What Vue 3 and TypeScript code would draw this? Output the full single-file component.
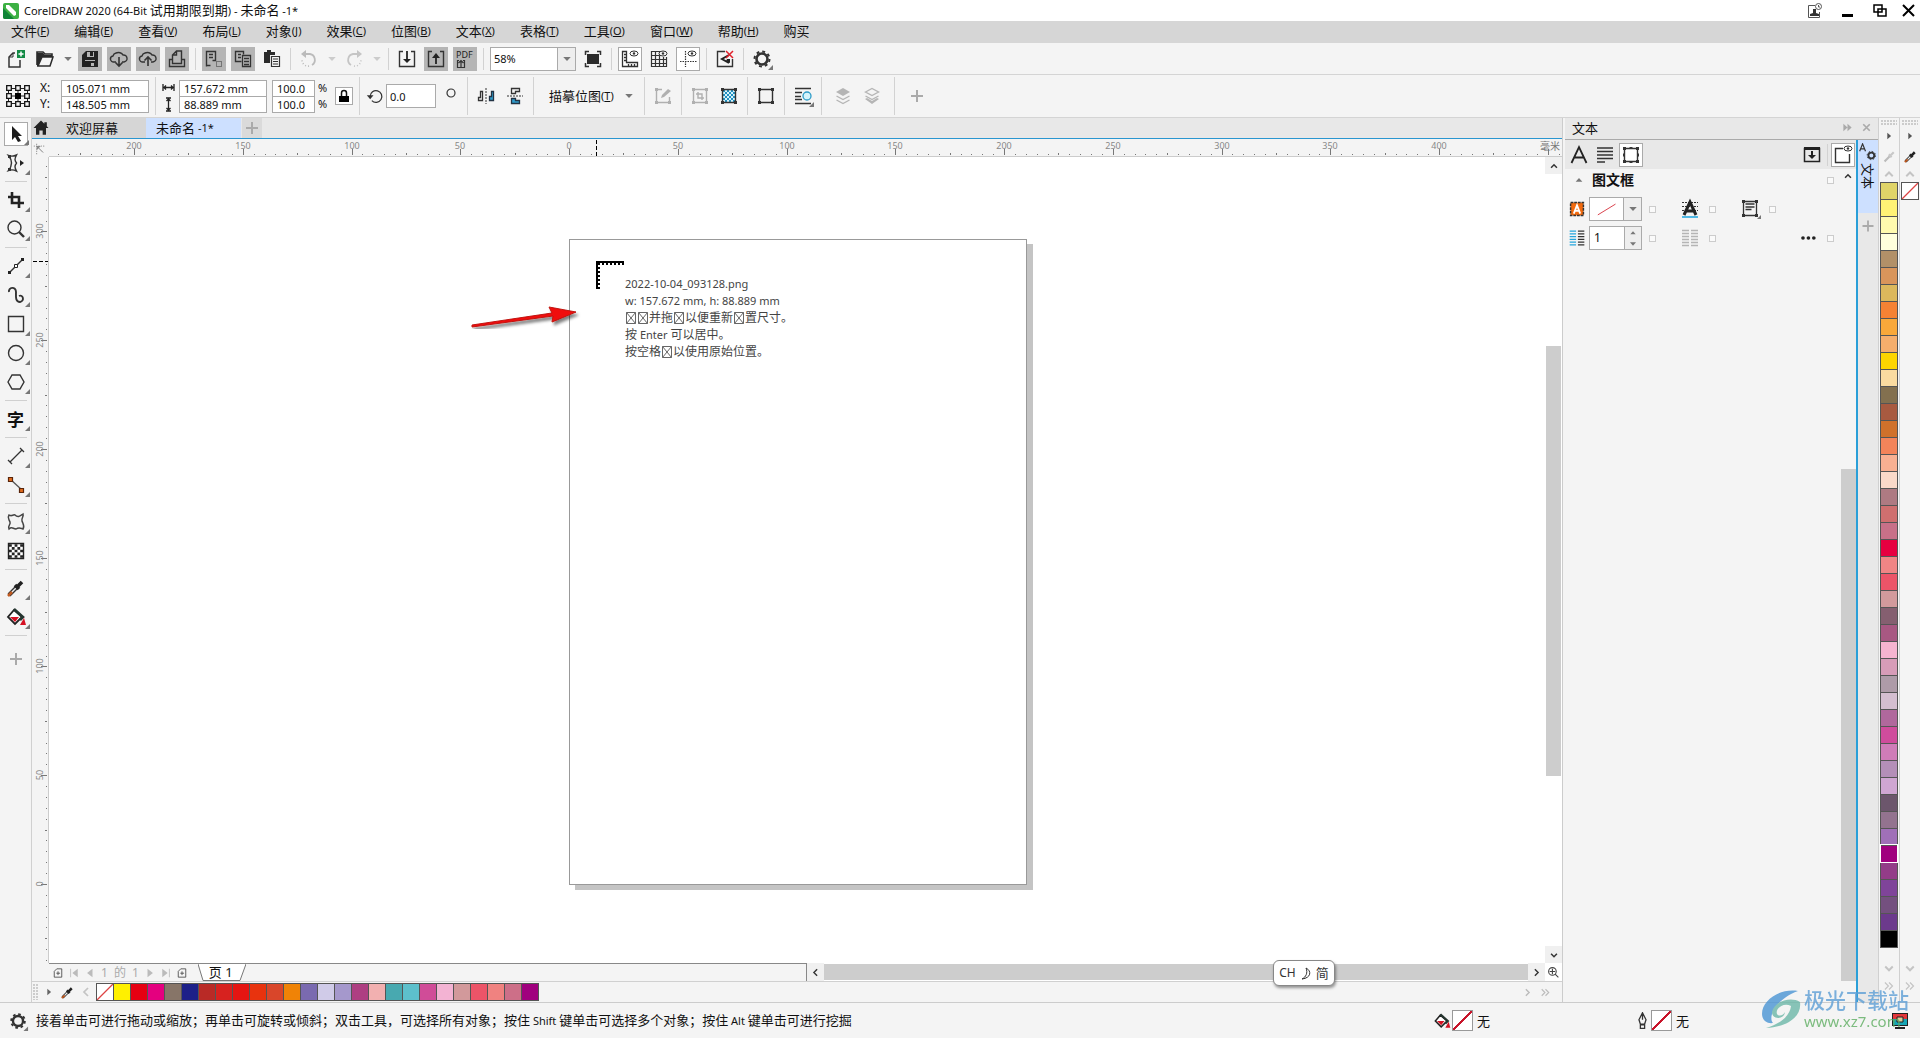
<script setup lang="ts">
import { h, type FunctionalComponent } from 'vue'

// Markup of each 24x24 glyph, keyed by name.
const glyphs: Record<string, string> = {
  new: '<path d="M11 6H9L5 10v10h11v-7" fill="none" stroke="#333" stroke-width="1.5"/><path d="M9 6v4H5" fill="none" stroke="#333"/><path d="M13 3h8v8h-8z" fill="#138a45"/><path d="M17 4.5v5M14.500 7h5" stroke="#fff" stroke-width="1.5"/>',
  open: '<path d="M4 18V5h6l2 2h7v3" fill="none" stroke="#2b2b2b" stroke-width="1.6"/><path d="M4 6h6l2 2h7v2H9L5 19H4z" fill="#2b2b2b"/><path d="M9 10h11l-3 9H5z" fill="#f4f4f4" stroke="#2b2b2b" stroke-width="1.5"/>',
  save: '<path d="M4 8l4-4h12v16H4z" fill="#222"/><path d="M9 5h7v5H9z" fill="#b5b5b5"/><path d="M12 5h3v4h-3z" fill="#222"/><path d="M7 13h10v1H7zM13 16h3v3h-3z" fill="#b5b5b5"/>',
  cloudDown: '<path d="M9 15H7a3 3 0 0 1-1-6 4 4 0 0 1 3-3 5 4 0 0 1 7 2 3.500 3.500 0 0 1 1 7h-2" fill="none" stroke="#333" stroke-width="1.4"/><path d="M12 10v9M8.500 15.500L12 19l3.500-3.500" fill="none" stroke="#333" stroke-width="1.6"/>',
  cloudUp: '<path d="M9 15H7a3 3 0 0 1-1-6 4 4 0 0 1 3-3 5 4 0 0 1 7 2 3.500 3.500 0 0 1 1 7h-2" fill="none" stroke="#333" stroke-width="1.4"/><path d="M12 19v-9M8.500 13.500L12 10l3.500 3.500" fill="none" stroke="#333" stroke-width="1.6"/>',
  print: '<path d="M4.500 12.500h3v4h9v-4h3v7h-15zM7.500 14V8l4-4h5v12M11.500 4v4h-4" fill="none" stroke="#333" stroke-width="1.4"/>',
  cut: '<path d="M4.500 19.500v-15h9v9h-3M4.500 14.500v4h4M7 7.500h4M7 10.500h4" fill="none" stroke="#333" stroke-width="1.4"/><path d="M14.500 14.500h5v5h-5z" fill="none" stroke="#333" stroke-dasharray="1 1"/>',
  copy: '<path d="M10.500 14.500h-6v-10h8v3M7 7.500h3M7 10.500h3" fill="none" stroke="#333" stroke-width="1.4"/><path d="M11.500 8.500h8v11h-8zM13 11.500h5M13 14.500h5M13 17.500h5" fill="none" stroke="#333" stroke-width="1.3"/>',
  paste: '<path d="M4 5h3V3h4v2h4v3h-5v8H4z" fill="#2b2b2b"/><path d="M11.500 9.500h8v10h-8zM13 12h5M13 14.500h5M13 17h5" fill="none" stroke="#333" stroke-width="1.2"/>',
  undo: '<path d="M6 7h7a6 6 0 0 1 2 11" fill="none" stroke="#bbb" stroke-width="1.8"/><path d="M9 3v8L4 7z" fill="#bbb"/><path d="M12 19a6 6 0 0 1-7-6" fill="none" stroke="#bbb" stroke-width="1.6" stroke-dasharray="1 2"/>',
  redo: '<path d="M18 7h-7a6 6 0 0 0-2 11" fill="none" stroke="#c5c5c5" stroke-width="1.8"/><path d="M15 3v8l5-4z" fill="#c5c5c5"/><path d="M12 19a6 6 0 0 0 7-6" fill="none" stroke="#c5c5c5" stroke-width="1.6" stroke-dasharray="1 2"/>',
  import: '<path d="M8 4.500H4.500v15h15v-15H16" fill="none" stroke="#333" stroke-width="1.4"/><path d="M12 4v10" stroke="#222" stroke-width="1.8"/><path d="M8 12h8l-4 4z" fill="#222"/>',
  export: '<path d="M8 4.500H4.500v15h15v-15H16" fill="none" stroke="#333" stroke-width="1.4"/><path d="M12 8v9" stroke="#222" stroke-width="1.8"/><path d="M8 11h8l-4-5z" fill="#222"/>',
  pdf: '<path d="M6 13.500H4.500v7h7v-7H10M8 20v-6M5.500 16L8 13.500l2.500 2.500" fill="none" stroke="#333" stroke-width="1.2"/><text x="3" y="11" font-size="9" font-family="Noto Sans, sans-serif" fill="#222">PDF</text>',
  fit: '<path d="M4.500 8V4.500H8M16 4.500h3.500V8M19.500 16v3.500H16M8 19.500H4.500V16" fill="none" stroke="#333" stroke-width="1.5"/><path d="M6 7h12v10H6z" fill="#2b2b2b"/>',
  rulers: '<path d="M4.500 4.500h4v11h11v4h-15zM6 7.500h2M6 10.500h2M6 13.500h2M10.500 17v2M13.500 17v2M16.500 17v2" fill="none" stroke="#333" stroke-width="1.3"/><ellipse cx="16" cy="6.500" rx="4" ry="2.500" fill="#fff" stroke="#333"/><circle cx="16" cy="6.500" r="1.200" fill="#333"/>',
  grid: '<path d="M4.500 4v16M8.500 4v16M12.500 4v16M16.500 10v10M19.500 10v10M4 4.500h8M4 8.500h8M4 12.500h16M4 16.500h16M4 19.500h16" fill="none" stroke="#333" stroke-width="1.2"/><ellipse cx="16" cy="6.500" rx="4" ry="2.500" fill="#f4f4f4" stroke="#333"/><circle cx="16" cy="6.500" r="1.200" fill="#333"/>',
  guides: '<path d="M9.500 4v16M4 14.500h17" fill="none" stroke="#333" stroke-width="1.2" stroke-dasharray="1.500 1"/><ellipse cx="16" cy="6.500" rx="4" ry="2.500" fill="#fff" stroke="#333"/><circle cx="16" cy="6.500" r="1.200" fill="#333"/>',
  snapOff: '<path d="M12 4.500H4.500v15h15V12" fill="none" stroke="#333" stroke-width="1.4"/><path d="M16 8L9 12l7 4" fill="none" stroke="#222" stroke-width="2"/><path d="M14 12h3v4l-4-2z" fill="#222"/><path d="M13 4l7 7M20 4l-7 7" stroke="#e0202a" stroke-width="1.5"/>',
  gear: '<circle cx="12" cy="12" r="5.500" fill="none" stroke="#333" stroke-width="2.600"/><circle cx="12" cy="12" r="7.500" fill="none" stroke="#333" stroke-width="2" stroke-dasharray="2.900 2.990"/><path d="M23 18v5h-5z" fill="#777"/>',
  origin: '<path d="M2.500 4.500h19v15h-19zM2.500 12h19M12 4v16" fill="none" stroke="#222"/><g fill="#f4f4f4" stroke="#111" stroke-width="1.300"><path d="M.7 1.700h4.600v4.600H.7zM9.700 1.700h4.600v4.600H9.700zM18.700 1.700h4.600v4.600h-4.600zM.7 9.700h4.600v4.600H.7zM18.700 9.700h4.600v4.600h-4.600zM.7 17.700h4.600v4.600H.7zM9.700 17.700h4.600v4.600H9.700zM18.700 17.700h4.600v4.600h-4.600z"/></g><path d="M9 9h6v6H9z"/>',
  rotate: '<path d="M7 17.500a7 7 0 1 0-2-5" fill="none" stroke="#333" stroke-width="1.500"/><path d="M1 11h8l-4 5z" fill="#333"/>',
  mirrorH: '<path d="M4.500 16.500v-3h2v-6h2v9z" fill="none" stroke="#333" stroke-width="1.300"/><path d="M12 4v16" stroke="#333" stroke-dasharray="2 1"/><path d="M15.500 16.500v-4h2v-5h2v9z" fill="#2f9ccc" stroke="#234" stroke-width="1.300"/>',
  mirrorV: '<path d="M8.500 9.500v-5h8v3h-4v2z" fill="none" stroke="#333" stroke-width="1.300"/><path d="M4 12h16" stroke="#333" stroke-dasharray="2 1"/><path d="M8.500 14.500h4v2h4v3h-8z" fill="#2f9ccc" stroke="#234" stroke-width="1.300"/>',
  editBitmap: '<path d="M11 5.500H5.500v13h13V13" fill="none" stroke="#b0b0b0" stroke-width="1.400"/><path d="M10 14l1-3 6-6 3 2-7 6z" fill="#b0b0b0"/><path d="M4 4h3v3H4zM4 17h3v3H4zM17 17h3v3h-3z" fill="#b0b0b0"/>',
  cropBitmap: '<path d="M5.500 5.500h13v13h-13zM10 8v6h6M8 10h6v6" fill="none" stroke="#b0b0b0" stroke-width="1.400"/><path d="M4 4h3v3H4zM17 4h3v3h-3zM4 17h3v3H4zM17 17h3v3h-3z" fill="#b0b0b0"/>',
  colorMask: '<path d="M5 5h14v14H5z" fill="#d4f3fc"/><path d="M6 7h12M6 11h12M6 15h12" stroke="#2290c0" stroke-width="2" stroke-dasharray="2 2"/><path d="M8 9h10M8 13h10M8 17h10" stroke="#2290c0" stroke-width="2" stroke-dasharray="2 2"/><path d="M5.500 5.500h13v13h-13z" fill="none" stroke="#333" stroke-width="1.400"/><path d="M4 4h3v3H4zM17 4h3v3h-3zM4 17h3v3H4zM17 17h3v3h-3z" fill="#333"/>',
  frame: '<path d="M5.500 5.500h13v13h-13z" fill="none" stroke="#333" stroke-width="1.400"/><path d="M4 4h3v3H4zM17 4h3v3h-3zM4 17h3v3H4zM17 17h3v3h-3z" fill="#333"/>',
  textFrame: '<path d="M5.500 5.500h13v13h-13z" fill="none" stroke="#333" stroke-width="1.400"/><path d="M4 4h3v3H4zM17 4h3v3h-3zM4 17h3v3H4zM17 17h3v3h-3zM10.500 4h3v2h-3zM10.500 18h3v2h-3zM4 10.500h2v3H4zM18 10.500h2v3h-2z" fill="#333"/>',
  wrap: '<path d="M4 4.500h16M4 8.500h7M4 12.500h6M4 15.500h7M4 19.500h16" stroke="#333" stroke-width="1.300"/><circle cx="16" cy="12" r="4" fill="#d5f3fb" stroke="#2e9cc8" stroke-width="1.300"/><path d="M23 18v5h-5z" fill="#777"/>',
  toFront: '<path d="M5 8l7-4 7 4-7 4z" fill="#b5b5b5"/><path d="M5.500 12l6.500 3.500 6.500-3.500M5.500 16l6.500 3.500 6.500-3.500" fill="none" stroke="#b5b5b5" stroke-width="1.400"/>',
  toBack: '<path d="M5.500 8L12 4.500 18.500 8 12 11.500zM5.500 12l6.500 3.500 6.500-3.500" fill="none" stroke="#b5b5b5" stroke-width="1.400"/><path d="M5 15l2-1 5 3 5-3 2 1-7 5z" fill="#b5b5b5"/>',
  plus: '<path d="M12 6v12M6 12h12" stroke="#aaa" stroke-width="2"/>',
  pick: '<path d="M8 4v14l3-3 3 5 3-1-3-5h4z" fill="#1c1c1c"/>',
  shape: '<path d="M4.500 4.500c3 1 5 1 8-.5-2 4-2 5 0 8-2 3-2 4 0 8-3-1.500-5-1.500-8-.5 4-5 4-10 0-15z" fill="none" stroke="#333" stroke-width="1.400"/><path d="M16 9l4 3-4 3z" fill="#222"/><path d="M4 4h3v3H4zM4 17h3v3H4z" fill="#333"/>',
  crop: '<path d="M8 4v11h12M4 9h11v11" fill="none" stroke="#222" stroke-width="2.600"/>',
  zoom: '<circle cx="10.500" cy="10.500" r="6.500" fill="none" stroke="#333" stroke-width="1.400"/><path d="M15 15l5 5" stroke="#333" stroke-width="2.400"/>',
  freehand: '<path d="M5 19L19 5" stroke="#333" stroke-width="1.400"/><path d="M4 17h3v3H4zM17 4h3v3h-3z" fill="#222"/><path d="M10.500 10.500h3v3h-3z" fill="#fff" stroke="#222"/>',
  artistic: '<path d="M5 9c-1-5 7-6 7 0 0 4-1 10 4 10 5-1 3-8-1-6" fill="none" stroke="#333" stroke-width="1.900"/>',
  rect: '<path d="M4.500 4.500h15v15h-15z" fill="none" stroke="#333" stroke-width="1.400"/>',
  ellipse: '<circle cx="12" cy="12" r="7.500" fill="none" stroke="#333" stroke-width="1.400"/>',
  polygon: '<path d="M4 12l4-7h8l4 7-4 7H8z" fill="none" stroke="#333" stroke-width="1.400"/>',
  dimension: '<path d="M6 18L18 6M4 16l4 4M16 4l4 4" fill="none" stroke="#333" stroke-width="1.300"/>',
  connector: '<path d="M6 6l12 11" stroke="#555" stroke-width="1.300"/><path d="M4.500 4.500h4v4h-4zM15.500 15.500h4v4h-4z" fill="#e06b1c" stroke="#59250a" stroke-width="1.200"/>',
  distort: '<path d="M5 5c3 2 4-1 6 0 3 3 5 1 8-1 1 3-2 4-1 7s3 5 1 8c-3-1-4-2-7 0-3 0-4-3-7 0-2-3 2-4 1-7S3 8 5 5z" fill="none" stroke="#444" stroke-width="1.500"/>',
  checker: '<path d="M4.500 4.500h15v15h-15z" fill="#fff" stroke="#222" stroke-width="1.400"/><path d="M5 6.500h14M5 12h14M5 17.500h14" stroke="#222" stroke-width="2.700" stroke-dasharray="2.800 2.800"/><path d="M7.800 9.300H19M7.800 14.800H19" stroke="#222" stroke-width="2.700" stroke-dasharray="2.800 2.800"/>',
  dropper: '<path d="M5 19l8-8" stroke="#333" stroke-width="4"/><path d="M7 17l5-5" stroke="#eee" stroke-width="1.500"/><path d="M4 20l4-4" stroke="#c05a20" stroke-width="2.600"/><path d="M11 9l4 4M13 11l5-5" stroke="#222" stroke-width="3.600"/>',
  dropperOff: '<path d="M5 19l8-8" stroke="#bbb" stroke-width="3"/><path d="M11 9l4 4M13 11l5-5" stroke="#c8c8c8" stroke-width="3"/>',
  fill: '<path d="M10 5l8 7-7 7-7-7z" fill="#fff" stroke="#222" stroke-width="1.800"/><path d="M10 4l9 8-3 3" fill="none" stroke="#25352f" stroke-width="2.600"/><path d="M6 12h9l-4 5z" fill="#d51224"/><path d="M20 13l2 7h-6z" fill="#d51224"/>',
  home: '<path d="M12 3L3 12h3v8h4v-5h4v5h4v-8h3l-2-2V5h-3v2z" fill="#222"/>',
  axes: '<path d="M3 7h18M8 3v18" fill="none" stroke="#888" stroke-dasharray="2 2" stroke-width="1.600"/><path d="M10 9l9 9" stroke="#777" stroke-width="1.600"/><path d="M8 7h7l-7 7z" fill="#888"/>',
  char: '<path d="M4.500 20L12 4l7.500 16M7.500 14.500h9" fill="none" stroke="#222" stroke-width="1.800"/>',
  para: '<path d="M4 5h16M4 8.500h16M4 12h16M4 15.500h16M4 19h8" stroke="#333" stroke-width="1.700"/>',
  panelIn: '<path d="M8 5.500H4.500v13h15v-13H16" fill="none" stroke="#222" stroke-width="1.500"/><path d="M4 4h16v3H4z" fill="#222"/><path d="M12 8v5" stroke="#222" stroke-width="2"/><path d="M8 12h8l-4 4z" fill="#222"/>',
  panelEye: '<path d="M12 5.500H4.500v14h14V11" fill="none" stroke="#333" stroke-width="1.400"/><ellipse cx="17" cy="5.500" rx="4" ry="2.500" fill="#fff" stroke="#333"/><circle cx="17" cy="5.500" r="1.200" fill="#333"/>',
  frameFill: '<path d="M5 5h14v14H5z" fill="#f26a0e" stroke="#333" stroke-width="1.600" stroke-dasharray="3 1"/><path d="M8.500 17L12 8l3.500 9M10 14h4" fill="none" stroke="#fff" stroke-width="2"/>',
  baseline: '<path d="M4 5.500h16M4 9.500h16M4 13.500h16" stroke="#333" stroke-dasharray="2 1"/><path d="M6 18L12 5l6 13M8 14h8" fill="none" stroke="#222" stroke-width="3"/><path d="M4 20h16" stroke="#27a9e0" stroke-width="1.600"/>',
  align: '<path d="M5.500 4.500h13v14h-13zM7.500 7h9M7.500 10h9M7.500 12.500h6" fill="none" stroke="#333" stroke-width="1.300"/><path d="M4 3h3v3H4zM17 3h3v3h-3zM4 17h3v3H4zM17 17h3v3h-3z" fill="#333"/><path d="M23 18v4h-4z" fill="#777"/>',
  columns: '<path d="M4 4.500h7M4 7.500h7M4 10.500h7M4 13.500h7M4 16.500h7M4 19.500h7" stroke="#26a5dc" stroke-width="1.500"/><path d="M13 4.500h7M13 7.500h7M13 10.500h7M13 13.500h7M13 16.500h7M13 19.500h7" stroke="#333" stroke-width="1.500"/>',
  columnsOff: '<path d="M4 4.500h7M4 7.500h7M4 10.500h7M4 13.500h7M4 16.500h7M4 19.500h7M13 4.500h7M13 7.500h7M13 10.500h7M13 13.500h7M13 16.500h7M13 19.500h7" stroke="#b5b5b5" stroke-width="1.500"/>',
  dots: '<circle cx="6" cy="12" r="2.200" fill="#222"/><circle cx="12.500" cy="12" r="2.200" fill="#222"/><circle cx="19" cy="12" r="2.200" fill="#222"/>',
  textTab: '<path d="M2 10L5.500 1 9 10M3.500 7h4" fill="none" stroke="#333" stroke-width="1.400"/><circle cx="16" cy="15" r="3.500" fill="none" stroke="#333" stroke-width="2.200"/><circle cx="16" cy="15" r="5" fill="none" stroke="#333" stroke-width="1.200" stroke-dasharray="1.900 2"/>',
  up: '<path d="M7 15l5-5 5 5" fill="none" stroke="currentColor" stroke-width="2.600"/>',
  down: '<path d="M7 10l5 5 5-5" fill="none" stroke="currentColor" stroke-width="2.600"/>',
  left: '<path d="M15 6l-6 6 6 6" fill="none" stroke="currentColor" stroke-width="2.600"/>',
  right: '<path d="M9 6l6 6-6 6" fill="none" stroke="currentColor" stroke-width="2.600"/>',
  more: '<path d="M5 6l6 6-6 6M12 6l6 6-6 6" fill="none" stroke="currentColor" stroke-width="2"/>',
  skip: '<path d="M3 4l9 8-9 8zM12 4l9 8-9 8z" fill="currentColor"/>',
  close: '<path d="M6 6l12 12M18 6L6 18" stroke="currentColor" stroke-width="3"/>',
  triRight: '<path d="M8 4l9 8-9 8z" fill="currentColor"/>',
  triLeft: '<path d="M18 2L5 12l13 10z" fill="currentColor"/>',
  triNext: '<path d="M6 2l13 10L6 22z" fill="currentColor"/>',
  triUp: '<path d="M4 16l8-9 8 9z" fill="currentColor"/>',
  triDown: '<path d="M3 7l9 10 9-10z" fill="currentColor"/>',
  first: '<path d="M21 2L8 12l13 10zM3 2h2v20H3z" fill="currentColor"/>',
  last: '<path d="M3 2l13 10L3 22zM19 2h2v20h-2z" fill="currentColor"/>',
  addPage: '<path d="M3 8l6-6h12v20H3zM12 8v9M8 12.500h9" fill="none" stroke="#444" stroke-width="2"/>',
  navigator: '<circle cx="10" cy="10" r="7" fill="none" stroke="#444" stroke-width="2"/><path d="M10 5v10M5 10h10M15 15l6 6" stroke="#444" stroke-width="2"/>',
  nib: '<path d="M12 1l5 10-2 6H9l-2-6zM9 18h6v5H9zM12 2v9" fill="none" stroke="#333" stroke-width="1.800"/>',
}

const Glyph: FunctionalComponent<{ name: string; size?: number }> = (props) =>
  h('svg', {
    class: 'glyph',
    viewBox: '0 0 24 24',
    width: props.size ?? 24,
    height: props.size ?? 24,
    'aria-hidden': 'true',
    innerHTML: glyphs[props.name],
  })
Glyph.props = ['name', 'size']

// Chinese runs are set two pixels larger than the Latin ones.
const Mixed: FunctionalComponent<{ text: string }> = (props) =>
  props.text
    .split(/([\u3000-\u9fff\uff00-\uffef]+)/)
    .filter(Boolean)
    .map((run) => (/[\u3000-\u9fff\uff00-\uffef]/.test(run) ? h('span', { class: 'han' }, run) : run))
Mixed.props = ['text']

const menus: [string, string][] = [
  ['文件', 'F'], ['编辑', 'E'], ['查看', 'V'], ['布局', 'L'], ['对象', 'J'], ['效果', 'C'], ['位图', 'B'],
  ['文本', 'X'], ['表格', 'T'], ['工具', 'O'], ['窗口', 'W'], ['帮助', 'H'], ['购买', ''],
]

interface Tool { icon: string; label: string; kind?: 'on' | 'boxed' | 'caret' | 'sep' | 'combo'; dim?: boolean }
const sep: Tool = { icon: '', label: '', kind: 'sep' }
const standard: Tool[] = [
  { icon: 'new', label: '新建' }, { icon: 'open', label: '打开' }, { icon: 'triDown', label: '最近打开', kind: 'caret' },
  { icon: 'save', label: '保存', kind: 'on' }, { icon: 'cloudDown', label: '从云打开', kind: 'on' },
  { icon: 'cloudUp', label: '保存到云', kind: 'on' }, { icon: 'print', label: '打印', kind: 'on' }, sep,
  { icon: 'cut', label: '剪切', kind: 'on' }, { icon: 'copy', label: '复制', kind: 'on' }, { icon: 'paste', label: '粘贴' }, sep,
  { icon: 'undo', label: '撤消' }, { icon: 'triDown', label: '撤消列表', kind: 'caret', dim: true },
  { icon: 'redo', label: '重做' }, { icon: 'triDown', label: '重做列表', kind: 'caret', dim: true }, sep,
  { icon: 'import', label: '导入' }, { icon: 'export', label: '导出', kind: 'on' }, { icon: 'pdf', label: '发布为 PDF', kind: 'on' }, sep,
  { icon: '', label: '缩放级别', kind: 'combo' }, { icon: 'fit', label: '全屏预览' }, sep,
  { icon: 'rulers', label: '显示标尺', kind: 'boxed' }, { icon: 'grid', label: '显示网格' },
  { icon: 'guides', label: '显示辅助线', kind: 'boxed' }, sep,
  { icon: 'snapOff', label: '贴齐关闭' }, sep, { icon: 'gear', label: '选项' },
]

const bitmapTools: Tool[] = [
  { icon: 'editBitmap', label: '编辑位图' }, sep, { icon: 'cropBitmap', label: '裁剪位图' },
  { icon: 'colorMask', label: '位图颜色遮罩' }, sep, { icon: 'frame', label: '轮廓' }, sep,
  { icon: 'wrap', label: '文本换行' }, sep,
]

interface BoxTool { icon: string; label: string; flyout?: boolean; active?: boolean }
const toolbox: (BoxTool | null)[] = [
  { icon: 'pick', label: '选择', flyout: true, active: true }, { icon: 'shape', label: '形状', flyout: true }, null,
  { icon: 'crop', label: '裁剪', flyout: true }, { icon: 'zoom', label: '缩放', flyout: true }, null,
  { icon: 'freehand', label: '手绘', flyout: true }, { icon: 'artistic', label: '艺术笔', flyout: true },
  { icon: 'rect', label: '矩形', flyout: true }, { icon: 'ellipse', label: '椭圆形', flyout: true },
  { icon: 'polygon', label: '多边形', flyout: true }, null,
  { icon: 'text', label: '文本', flyout: true }, null,
  { icon: 'dimension', label: '平行度量', flyout: true }, { icon: 'connector', label: '连接器', flyout: true }, null,
  { icon: 'distort', label: '变形', flyout: true }, { icon: 'checker', label: '透明度' }, null,
  { icon: 'dropper', label: '颜色滴管', flyout: true }, { icon: 'fill', label: '交互式填充', flyout: true }, null,
]

// One ruler step is 5 mm; 40 steps span 435 px at the current zoom.
const stepToPx = (step: number) => Math.round((step * 435) / 40)
const originX = 520
const originY = 727
const ticks = (from: number, to: number) => Array.from({ length: to - from + 1 }, (_, i) => from + i)
const across = ticks(-47, 94)
const downward = ticks(-8, 66)
const tickLength = (step: number) => (step % 10 === 0 ? 6 : step % 5 === 0 ? 2 : 1)

const palette = (
  'e0d468 fff275 fffaae ffffdc b29068 d9955b dcb85c f58234 f9a83a f5ae6c fdd500 fadba0 83704f a85a40 d0712b ' +
  'f3845a f8b092 fad9c9 ae7a82 cf6f6f c87088 e60040 f08585 ec5468 d29a9c 855f70 a85882 f6b4d0 d79cb8 ae9ba8 ' +
  'd4bed0 b0689c cf4c9c cf7cb8 b48fb8 cfa6d2 6c566c 93738f a070b8 a0007e 933c88 7f4499 74507f 6c3a8c 000000'
).split(' ')
const documentColors = (
  'fff000 e60012 e4007f 877568 1d2088 b92a26 d7221f e51512 e8330e d9462a f08306 7a6ab0 d0cbe8 a598cc ae3f82 ' +
  'f2b0b0 48a9b0 5dc0cc d04c98 f3b3d3 d2999b ec5468 f08280 cd6f88 a0007e'
).split(' ')

// A "□" stands for a character the font has no glyph for.
const hints = ['2022-10-04_093128.png', 'w: 157.672 mm, h: 88.889 mm', '□□并拖□以便重新□置尺寸。', '按 Enter 可以居中。', '按空格□以使用原始位置。']
const statusHint = '接着单击可进行拖动或缩放；再单击可旋转或倾斜；双击工具，可选择所有对象；按住 Shift 键单击可选择多个对象；按住 Alt 键单击可进行挖掘'
</script>

<template>
  <div class="app">
    <header class="title">
      <svg class="logo" viewBox="0 0 16 16" width="16" height="16" aria-hidden="true">
        <rect width="16" height="16" rx="2" fill="#3cb043" /><path d="M0 5l11 11H2a2 2 0 0 1-2-2z" fill="#0f8436" /><path d="M3 2h3l7 7v3l-2 1L3 5z" fill="#fff" />
      </svg>
      <h1><Mixed text="CorelDRAW 2020 (64-Bit 试用期限到期) - 未命名 -1*" /></h1>
      <div class="window-buttons">
        <button aria-label="登录"><svg width="16" height="16" viewBox="0 0 16 16"><path d="M9 2.500H2.500v12h11V9" fill="none" stroke="#555" /><path d="M4 13v-2l3-1V6h3v4l3 1v2z" fill="#333" /><circle cx="12.500" cy="3.500" r="3" fill="#fff" stroke="#555" /><path d="M12.500 2v2H14" fill="none" stroke="#555" /></svg></button>
        <button aria-label="最小化"><svg width="16" height="16" viewBox="0 0 16 16"><path d="M3 11h11v3H3z" /></svg></button>
        <button aria-label="还原"><svg width="16" height="16" viewBox="0 0 16 16"><path d="M2 2h8v7H2zM6 6h8v7H6z" fill="#fff" stroke="#000" stroke-width="1.500" /></svg></button>
        <button class="close" aria-label="关闭"><svg width="16" height="16" viewBox="0 0 16 16"><path d="M2 2l11 11M13 2L2 13" stroke="#000" stroke-width="2" /></svg></button>
      </div>
    </header>

    <nav class="menu">
      <button v-for="[name, key] in menus" :key="name"><span class="han">{{ name }}</span><template v-if="key">(<u>{{ key }}</u>)</template></button>
    </nav>

    <div class="bar standard">
      <template v-for="(t, i) in standard" :key="i">
        <span v-if="t.kind === 'sep'" class="sep"></span>
        <span v-else-if="t.kind === 'combo'" class="combo">
          <select :aria-label="t.label"><option>58%</option></select>
          <span class="drop"><Glyph name="triDown" :size="10" /></span>
        </span>
        <button v-else :class="['tool', t.kind, { dim: t.dim }]" :aria-label="t.label"><Glyph :name="t.icon" :size="t.kind === 'caret' ? 10 : 24" /></button>
      </template>
    </div>

    <div class="bar property">
      <button class="tool" aria-label="对象原点"><Glyph name="origin" /></button>
      <div class="axis"><label for="px">X:</label><label for="py">Y:</label></div>
      <div class="pair wide"><input id="px" value="105.071 mm" /><input id="py" value="148.505 mm" /></div>
      <span class="sep"></span>
      <div class="size-icons">
        <svg width="13" height="17" viewBox="0 0 13 17"><path d="M1 5v7M12 5v7M1 8.500h11M4 6.500l-2 2 2 2M9 6.500l2 2-2 2" fill="none" stroke="#222" stroke-width="1.300" /></svg>
        <svg width="13" height="17" viewBox="0 0 13 17"><path d="M4 2h5M4 15h5M6.500 2v13M4.500 5l2-2 2 2M4.500 12l2 2 2-2" fill="none" stroke="#222" stroke-width="1.300" /></svg>
      </div>
      <div class="pair wide"><input aria-label="宽度" value="157.672 mm" /><input aria-label="高度" value="88.889 mm" /></div>
      <div class="pair scale"><input aria-label="水平缩放" value="100.0" /><input aria-label="垂直缩放" value="100.0" /></div>
      <div class="percent"><span>%</span><span>%</span></div>
      <button class="lock" aria-label="锁定比率"><svg width="12" height="14" viewBox="0 0 12 14"><path d="M3.500 7V4a2.500 2.500 0 0 1 5 0v3" fill="none" stroke="#111" stroke-width="1.500" /><path d="M1 7h10v6H1z" /></svg></button>
      <span class="sep"></span>
      <div class="turn">
        <label for="angle"><Glyph name="rotate" :size="20" /></label>
        <input id="angle" class="angle" value="0.0" />
        <svg class="degree" width="10" height="16" viewBox="0 0 10 16"><circle cx="5" cy="5" r="4" fill="none" stroke="#333" stroke-width="1.200" /></svg>
      </div>
      <span class="sep"></span>
      <button class="tool" aria-label="水平镜像"><Glyph name="mirrorH" /></button>
      <button class="tool" aria-label="垂直镜像"><Glyph name="mirrorV" /></button>
      <span class="sep"></span>
      <button class="trace"><span class="han">描摹位图</span>(<u>T</u>)<Glyph name="triDown" :size="10" /></button>
      <span class="sep"></span>
      <template v-for="(t, i) in bitmapTools" :key="i">
        <span v-if="t.kind === 'sep'" class="sep"></span>
        <button v-else class="tool" :aria-label="t.label"><Glyph :name="t.icon" /></button>
      </template>
      <div class="order">
        <button class="tool" aria-label="到图层前面"><Glyph name="toFront" /></button>
        <button class="tool" aria-label="到图层后面"><Glyph name="toBack" /></button>
      </div>
      <span class="sep"></span>
      <button class="tool add" aria-label="快速自定义"><Glyph name="plus" /></button>
    </div>

    <main class="work">
      <aside class="toolbox">
        <template v-for="(t, i) in toolbox" :key="i">
          <hr v-if="!t" />
          <button v-else :class="['tool', { boxed: t.active, flyout: t.flyout }]" :aria-label="t.label">
            <span v-if="t.icon === 'text'" class="zi">字</span><Glyph v-else :name="t.icon" />
          </button>
        </template>
        <button class="tool more" aria-label="快速自定义"><Glyph name="plus" /></button>
      </aside>

      <section class="center">
        <div class="tabs">
          <button class="home" aria-label="欢迎"><Glyph name="home" :size="20" /></button>
          <button class="tab">欢迎屏幕</button>
          <button class="tab current"><Mixed text="未命名 -1*" /></button>
          <button class="new-tab" aria-label="新建文档"><Glyph name="plus" /></button>
        </div>
        <div class="ruler-row">
          <div class="corner"><Glyph name="axes" :size="14" /></div>
          <svg class="ruler-top" height="18" aria-hidden="true">
            <g v-for="s in across" :key="s">
              <rect :x="originX + stepToPx(s)" :y="16 - tickLength(s)" width="1" :height="tickLength(s)" fill="#777" />
              <text v-if="s % 10 === 0 && s < 85" :x="originX + stepToPx(s)" y="10" text-anchor="middle">{{ Math.abs(s * 5) }}</text>
            </g>
            <path d="M547.500 1v16" stroke="#000" stroke-width="1" stroke-dasharray="4 2" />
          </svg>
          <span class="unit">毫米</span>
        </div>
        <div class="view-row">
          <svg class="ruler-left" width="17" aria-hidden="true">
            <g v-for="s in downward" :key="s">
              <rect :x="15 - tickLength(s)" :y="originY - stepToPx(s)" :width="tickLength(s)" height="1" fill="#777" />
              <text v-if="s % 10 === 0" :transform="`translate(11 ${originY - stepToPx(s)}) rotate(-90)`" text-anchor="middle">{{ s * 5 }}</text>
            </g>
            <path d="M1 104.500h15" stroke="#000" stroke-dasharray="4 2" />
          </svg>
          <div class="canvas">
            <div class="page"></div>
            <svg class="corner-cursor" width="28" height="28" viewBox="0 0 28 28" aria-hidden="true">
              <path d="M0 1h28M1 0v28" stroke="#000" stroke-width="2" /><path d="M2 3h26M3 2v26" stroke="#000" stroke-width="2" stroke-dasharray="2 2" />
            </svg>
            <div class="hints">
              <p v-for="line in hints" :key="line"><template v-for="(ch, i) in line.split(/(□|[\u3000-\u9fff]+)/).filter(Boolean)" :key="i"><svg v-if="ch === '□'" class="missing" width="12" height="12" viewBox="0 0 12 12"><path d="M1.500 .5h9v11h-9zM1.500 .5l9 11M10.500 .5l-9 11" fill="none" stroke="#666" /></svg><span v-else :class="{ cjk: /[\u3000-\u9fff]/.test(ch) }">{{ ch }}</span></template></p>
            </div>
            <svg class="pointer" width="120" height="36" viewBox="0 0 120 36" aria-hidden="true">
              <defs><filter id="soft"><feDropShadow dx="2" dy="3" stdDeviation="1.500" flood-opacity=".5" /></filter></defs>
              <path d="M4 21L84 9l-3-6 27 5-24 10 1-6L4 23z" fill="#f0100c" stroke="#c01410" stroke-width="1" filter="url(#soft)" />
            </svg>
          </div>
          <div class="vscroll">
            <button aria-label="向上滚动"><Glyph name="up" :size="14" /></button>
            <div class="track"><div class="thumb"></div></div>
            <button aria-label="向下滚动"><Glyph name="down" :size="14" /></button>
          </div>
        </div>
        <div class="page-row">
          <div class="pages">
            <button aria-label="在前面添加页"><Glyph name="addPage" :size="10" /></button>
            <button aria-label="第一页"><Glyph name="first" :size="10" /></button>
            <button aria-label="上一页"><Glyph name="triLeft" :size="10" /></button>
            <span class="count"><span>1</span><span>的</span><span>1</span></span>
            <button aria-label="下一页"><Glyph name="triNext" :size="10" /></button>
            <button aria-label="最后一页"><Glyph name="last" :size="10" /></button>
            <button aria-label="在后面添加页"><Glyph name="addPage" :size="10" /></button>
            <button class="page-tab">
              <svg width="48" height="17" viewBox="0 0 48 17" aria-hidden="true"><path d="M0 0l5 16h37l6-16z" fill="#fff" /><path d="M0 0l5 16.500h37l6-16.500" fill="none" stroke="#777" /></svg>
              <span>页 1</span>
            </button>
          </div>
          <div class="hscroll">
            <button aria-label="向左滚动"><Glyph name="left" :size="13" /></button>
            <div class="thumb"></div>
            <button aria-label="向右滚动"><Glyph name="right" :size="13" /></button>
            <button class="nav" aria-label="导航器"><Glyph name="navigator" :size="13" /></button>
          </div>
        </div>
        <div class="doc-palette">
          <span class="grip"></span>
          <button aria-label="调色板菜单"><Glyph name="triRight" :size="10" /></button>
          <button aria-label="滴管"><Glyph name="dropper" :size="17" /></button>
          <button class="faint" aria-label="向左"><Glyph name="left" :size="16" /></button>
          <div class="swatches">
            <button class="none" aria-label="无颜色"></button>
            <button v-for="c in documentColors" :key="c" :style="{ background: '#' + c }" :aria-label="'#' + c"></button>
          </div>
          <div class="palette-end"><Glyph name="right" :size="13" /><Glyph name="more" :size="13" /></div>
        </div>
      </section>

      <section class="docker">
        <div class="docker-title"><h2>文本</h2><button aria-label="折叠"><Glyph name="skip" :size="11" /></button><button aria-label="关闭"><Glyph name="close" :size="13" /></button></div>
        <div class="docker-main">
          <div class="panel">
            <div class="panel-tools">
              <button class="tool" aria-label="字符"><Glyph name="char" /></button>
              <button class="tool" aria-label="段落"><Glyph name="para" /></button>
              <button class="tool boxed" aria-label="图文框"><Glyph name="textFrame" /></button>
              <span class="grow"></span>
              <button class="tool" aria-label="默认值"><Glyph name="panelIn" /></button>
              <span class="sep"></span>
              <button class="tool boxed" aria-label="显示"><Glyph name="panelEye" /></button>
            </div>
            <div class="panel-body">
              <div class="fields">
                <div class="group"><Glyph name="triUp" :size="10" /><h3>图文框</h3><i class="mark"></i></div>
                <div class="field-row">
                  <Glyph name="frameFill" :size="22" />
                  <button class="picker" aria-label="背景色"><svg width="34" height="22" viewBox="0 0 34 22"><path d="M8 17L26 6" stroke="#d9404a" /></svg><span class="drop"><Glyph name="triDown" :size="10" /></span></button>
                  <i class="mark"></i>
                  <Glyph class="next" name="baseline" /><i class="mark"></i>
                  <Glyph class="next" name="align" /><i class="mark"></i>
                </div>
                <div class="field-row">
                  <Glyph name="columns" :size="22" />
                  <div class="picker"><input aria-label="栏数" value="1" /><span class="spin"><button aria-label="增加"><Glyph name="triUp" :size="8" /></button><button aria-label="减少"><Glyph name="triDown" :size="8" /></button></span></div>
                  <i class="mark"></i>
                  <Glyph class="next" name="columnsOff" /><i class="mark"></i>
                  <span class="grow"></span>
                  <Glyph name="dots" :size="20" /><i class="mark last"></i>
                </div>
              </div>
              <div class="panel-scroll"><Glyph name="up" :size="14" /><div class="thumb"></div></div>
            </div>
          </div>
          <div class="strip">
            <button class="strip-tab"><Glyph name="textTab" :size="20" /><span>文本</span></button>
            <button class="strip-add" aria-label="添加泊坞窗"><Glyph name="plus" :size="22" /></button>
          </div>
        </div>
      </section>

      <aside class="palette">
        <span class="grip"></span>
        <button aria-label="调色板菜单"><Glyph name="triRight" :size="10" /></button>
        <button class="pipette" aria-label="滴管"><Glyph name="dropperOff" :size="17" /></button>
        <button class="faint" aria-label="向上"><Glyph name="up" :size="18" /></button>
        <div class="swatches">
          <button v-for="(c, i) in palette" :key="i" :class="{ picked: c === 'a0007e' }" :style="{ background: '#' + c }" :aria-label="'#' + c"></button>
        </div>
        <span class="grow"></span>
        <div class="ends faint"><Glyph name="down" :size="18" /><Glyph name="more" :size="14" /></div>
      </aside>
      <aside class="palette">
        <span class="grip"></span>
        <button aria-label="调色板菜单"><Glyph name="triRight" :size="10" /></button>
        <button class="pipette" aria-label="滴管"><Glyph name="dropper" :size="17" /></button>
        <button class="faint" aria-label="向上"><Glyph name="up" :size="18" /></button>
        <div class="swatches"><button class="none" aria-label="无颜色"></button></div>
        <span class="grow"></span>
        <div class="ends faint"><Glyph name="down" :size="18" /><Glyph name="more" :size="14" /></div>
      </aside>
    </main>

    <footer class="status">
      <Glyph name="gear" :size="22" />
      <p><Mixed :text="statusHint" /></p>
      <div class="state"><Glyph name="fill" :size="20" /><span class="none big"></span><span class="han">无</span></div>
      <div class="state pen"><Glyph name="nib" :size="17" /><span class="none big"></span><span class="han">无</span></div>
      <svg class="proof" width="18" height="18" viewBox="0 0 18 18" aria-hidden="true"><path d="M1 1h16v13H1z" fill="#222" /><path d="M2 2h14v5H2z" fill="#e3373b" /><path d="M2 7h14v6H2z" fill="#16a5b5" /><path d="M6 5h6v5H6z" fill="#dc9" stroke="#222" /><path d="M4 16h10" stroke="#222" stroke-width="2" /></svg>
    </footer>

    <div class="ime">CH <svg width="12" height="13" viewBox="0 0 12 13" aria-hidden="true"><path d="M6 1c6 3 5 10-4 11 4-2 6-6 4-11z" fill="#fff" stroke="#333" /></svg> <span class="han">简</span></div>
    <div class="watermark">
      <svg width="44" height="42" viewBox="0 0 44 42" aria-hidden="true">
        <path d="M38 3C20 0 2 12 2 26c0 6 5 10 11 9C8 30 14 12 38 3z" fill="#4a94d4" /><path d="M40 14c2 14-12 25-34 26 14-4 24-12 25-22-8-4-16 3-14 8 2 3 7 1 8-2-1 8-13 8-13 0 2-10 18-16 28-10z" fill="#6db8a8" />
      </svg>
      <div><strong>极光下载站</strong><span>www.xz7.com</span></div>
    </div>
  </div>
</template>

<style>
body { margin: 0; }
.glyph { display: block; flex: none; }
.han { font-size: 13px; }
</style>

<style scoped>
.app { position: relative; display: flex; flex-direction: column; min-height: 100vh; overflow: hidden; background: #f4f4f4; color: #111; font: 11px/16px "Noto Sans", "Noto Sans CJK SC", sans-serif; }
button { display: flex; align-items: center; justify-content: center; margin: 0; padding: 0; border: 0; background: none; color: inherit; font: inherit; }
input, select { box-sizing: border-box; margin: 0; border: 1px solid #aaa; border-radius: 0; background: #fff; color: #111; font: inherit; }
h1, h2, h3, p { margin: 0; font-size: inherit; font-weight: 400; }
.grow { flex: 1; }
.title { display: flex; align-items: center; height: 21px; background: #fff; }
.logo { margin: 0 5px 0 3px; }
.title h1 { flex: 1; }
.window-buttons { display: flex; gap: 17px; padding-right: 3px; }
.window-buttons .close { margin-left: -4px; }
.menu { display: flex; height: 22px; background: #d6d6d6; }
.menu button { padding: 0 14px 2px 11px; }
.bar { display: flex; align-items: center; box-sizing: border-box; border-bottom: 1px solid #d4d4d4; background: #f4f4f4; }
.standard { height: 32px; gap: 5px; padding-left: 4px; }
.tool { position: relative; flex: none; box-sizing: border-box; width: 24px; height: 24px; }
.tool.on { background: #b5b5b5; }
.tool.boxed { border: 1px solid #aaa; background: #fff; }
.tool.caret { width: 11px; color: #777; }
.tool.dim { color: #ccc; }
.flyout::after { content: ""; position: absolute; right: -2px; bottom: 0; border: solid transparent; border-width: 0 0 5px 5px; border-bottom-color: #777; }
.sep { flex: none; width: 3px; height: 22px; background: linear-gradient(#d2d2d2, #d2d2d2) center / 1px 100% no-repeat; }
.combo { display: flex; box-sizing: border-box; width: 86px; height: 24px; border: 1px solid #aaa; background: #fff; }
.combo select { flex: 1; padding: 0 3px; border: 0; appearance: none; }
.drop { display: flex; align-items: center; justify-content: center; width: 17px; border-left: 1px solid #aaa; background: #eee; color: #777; }
.property { height: 43px; gap: 5px; padding-left: 6px; }
.property .sep { height: 38px; }
.axis { display: flex; flex-direction: column; width: 17px; padding-left: 5px; font-size: 12px; }
.pair { display: flex; flex-direction: column; }
.pair input { height: 17px; padding: 0 4px; }
.pair input + input { margin-top: -1px; }
.wide { width: 88px; }
.axis + .wide { margin-left: -1px; }
.scale { width: 43px; }
.percent { display: flex; flex-direction: column; width: 12px; margin-left: -2px; }
.size-icons { display: flex; flex-direction: column; width: 12px; }
.lock { box-sizing: border-box; width: 18px; height: 18px; border: 1px solid #aaa; background: #fff; }
.turn { display: flex; align-items: center; }
.angle { width: 50px; height: 24px; margin: 0 10px 0 0; padding: 0 3px; }
.degree { margin-right: 5px; }
.trace { flex: none; justify-content: flex-start; width: 98px; padding-left: 9px; white-space: nowrap; }
.trace .glyph { margin-left: 10px; color: #777; }
.order { display: flex; gap: 5px; padding: 0 4px 0 3px; }
.add { margin-left: 4px; }
.work { display: flex; flex: 1; }
.toolbox { display: flex; flex-direction: column; align-items: center; gap: 5px; width: 32px; box-sizing: border-box; padding-top: 4px; border-right: 1px solid #d0d0d0; }
.toolbox hr { width: 22px; height: 1px; margin: 1px 0; border: 0; background: #d0d0d0; }
.more { margin-top: 5px; }
.zi { font: 700 17px/24px "Noto Sans CJK SC", sans-serif; }
.center { display: flex; flex: 1; flex-direction: column; min-width: 0; border-right: 1px solid #ccc; }
.tabs { display: flex; height: 20px; border-bottom: 1px solid #2a96d0; background: #e8e8e8; }
.tabs button { padding-bottom: 1px; }
.tabs .home { width: 18px; background: #d6d6d6; }
.tabs .tab { padding-left: 16px; padding-right: 28px; background: #d6d6d6; font-size: 13px; white-space: pre; }
.tabs .current { padding-left: 10px; padding-right: 27px; background: #cde0ff; font-size: 11px; }
.tabs .new-tab { width: 20px; margin-left: 1px; background: #dadada; }
.ruler-row { position: relative; display: flex; height: 18px; }
.corner { box-sizing: border-box; width: 17px; padding-top: 3px; }
.ruler-top { flex: 1; min-width: 0; border-bottom: 1px solid #ccc; box-sizing: border-box; }
.center text { fill: #888; font: 9px "Noto Sans", sans-serif; }
.unit { position: absolute; top: 0; right: 2px; color: #777; font-size: 10px; line-height: 14px; }
.view-row { display: flex; flex: 1; }
.ruler-left { box-sizing: border-box; height: 100%; border-right: 1px solid #ccc; }
.canvas { position: relative; flex: 1; overflow: hidden; background: #fff; }
.page { position: absolute; left: 520px; top: 82px; width: 456px; height: 644px; border: 1px solid #999; background: #fff; box-shadow: 6px 5px #c4c4c4; }
.corner-cursor { position: absolute; left: 547px; top: 104px; }
.hints { position: absolute; left: 576px; top: 118px; color: #444; font-size: 11px; line-height: 17px; }
.hints p { height: 17px; white-space: pre; }
.cjk { font-size: 12px; }
.missing { vertical-align: -2px; }
.pointer { position: absolute; left: 419px; top: 147px; }
.vscroll { display: flex; flex-direction: column; width: 17px; background: #fff; color: #333; }
.vscroll button { height: 17px; background: #f0f0f0; }
.track { display: flex; flex: 1; flex-direction: column; }
.vscroll .thumb { height: 430px; margin: 172px 1px 0; background: #cdcdcd; }
.page-row { display: flex; height: 18px; padding-left: 17px; color: #333; }
.pages { display: flex; flex: 1; align-items: center; box-sizing: border-box; padding-left: 4px; gap: 6px; border: solid #888; border-width: 1px 1px 0 0; color: #bbb; }
.count { display: flex; gap: 6px; color: #aaa; font-size: 12px; }
.page-tab { position: relative; height: 17px; margin: -1px 0 0 5px; color: #111; }
.page-tab span { position: absolute; left: 11px; font-size: 13px; line-height: 15px; white-space: nowrap; }
.hscroll { display: flex; width: 755px; background: #fff; }
.hscroll button { width: 17px; background: #f0f0f0; }
.hscroll .nav { background: #fff; }
.hscroll .thumb { flex: 1; margin: 1px 0; background: #cdcdcd; }
.doc-palette { display: flex; align-items: center; box-sizing: border-box; height: 21px; border-top: 1px solid #d0d0d0; color: #666; }
.doc-palette > button { margin-left: 5px; }
.doc-palette .grip { width: 6px; height: 16px; margin-left: 1px; }
.grip { background: radial-gradient(circle at 1px 1px, #ccc 1px, transparent 1px) 0 0 / 3px 3px; }
.doc-palette .faint { margin-left: 2px; }
.faint { color: #c4c4c4; }
.swatches { display: flex; border: 1px solid #555; }
.doc-palette .swatches { margin-left: 2px; }
.swatches button { width: 16px; height: 16px; }
.doc-palette .swatches button + button { border-left: 1px solid #555; width: 17px; }
.none { background: linear-gradient(to top left, transparent 47%, #d22 48%, #d22 52%, transparent 53%) #fff; }
.swatches .none { background: linear-gradient(to bottom right, transparent 46%, #d44 48%, #d44 52%, transparent 54%) #fff; }
.big { background: linear-gradient(to bottom right, transparent 46%, #c8142a 47%, #c8142a 53%, transparent 54%) #fff; }
.palette-end { display: flex; gap: 5px; margin-left: auto; padding-right: 10px; color: #bbb; }
.docker { display: flex; flex-direction: column; width: 313px; margin-left: 2px; }
.docker-title { display: flex; align-items: center; gap: 7px; box-sizing: border-box; height: 22px; padding: 0 5px 2px 7px; border-bottom: 1px solid #aaa; background: #e8e8e8; color: #aaa; }
.docker-title h2 { flex: 1; color: #111; font-size: 13px; }
.docker-main { display: flex; flex: 1; }
.panel { display: flex; flex: 1; flex-direction: column; }
.panel-tools { display: flex; align-items: center; height: 29px; gap: 2px; padding: 0 1px 0 2px; background: #e8e8e8; }
.panel-body { display: flex; flex: 1; }
.fields { flex: 1; padding-left: 1px; }
.group { display: flex; align-items: center; height: 22px; gap: 8px; padding: 0 6px 0 8px; color: #777; }
.group h3 { flex: 1; color: #111; font-size: 14px; font-weight: 700; }
.mark { flex: none; box-sizing: border-box; width: 7px; height: 7px; border: 1px solid #ccc; background: #fafafa; }
.field-row { display: flex; align-items: center; height: 24px; margin-bottom: 5px; gap: 1px; }
.group + .field-row { margin-top: 6px; }
.picker { display: flex; align-items: stretch; box-sizing: border-box; width: 53px; height: 24px; border: 1px solid #aaa; background: #fff; }
.picker input { width: 34px; padding: 0 4px; border: 0; font-size: 12px; }
.spin { display: flex; flex: 1; flex-direction: column; border-left: 1px solid #aaa; background: #eee; color: #777; }
.spin button { flex: 1; }
.field-row .mark { margin-left: 6px; }
.next { margin-left: 21px; }
.field-row .last { margin-left: 8px; margin-right: 6px; }
.panel-scroll { display: flex; flex-direction: column; align-items: center; width: 16px; color: #333; }
.panel-scroll .thumb { width: 15px; height: 512px; margin-top: 286px; background: #cdcdcd; }
.strip { width: 20px; border-left: 2px solid #2a9fd8; background: #e8e8e8; }
.strip-tab { flex-direction: column; justify-content: flex-start; width: 20px; height: 73px; padding-top: 3px; background: #cde0ff; }
.strip-tab span { font-size: 13px; line-height: 20px; writing-mode: vertical-rl; text-orientation: sideways; }
.strip-add { width: 20px; height: 26px; }
.palette { display: flex; flex-direction: column; align-items: center; box-sizing: border-box; width: 21px; border-left: 1px solid #d0d0d0; color: #555; }
.palette .grip { width: 16px; height: 6px; margin-top: 2px; }
.palette > button { height: 20px; }
.palette > button.faint { height: 16px; }
.palette .swatches { flex-direction: column; }
.palette .swatches button + button { border-top: 1px solid #555; height: 17px; }
.palette .swatches .picked { box-shadow: 0 0 0 1px #fff; z-index: 1; }
.ends { display: flex; flex-direction: column; align-items: center; gap: 2px; padding-bottom: 9px; }
.status { display: flex; align-items: center; box-sizing: border-box; height: 36px; padding: 0 11px 0 7px; border-top: 1px solid #ccc; }
.status p { flex: 1; margin-left: 7px; white-space: nowrap; }
.state { display: flex; align-items: center; width: 202px; gap: 4px; }
.state .glyph { margin-right: -4px; }
.pen { width: 257px; }
.big { box-sizing: border-box; width: 21px; height: 21px; border: 1px solid #999; }
.ime { position: absolute; right: 585px; bottom: 52px; display: flex; align-items: center; justify-content: center; gap: 4px; width: 60px; height: 24px; border: 1px solid #888; border-radius: 6px; background: #fff; box-shadow: 1px 2px 3px #0006; color: #333; font-size: 12px; }
.watermark { position: absolute; right: 11px; bottom: 8px; display: flex; opacity: .8; pointer-events: none; }
.watermark div { display: flex; flex-direction: column; }
.watermark strong { color: #5d9fd6; font-size: 21px; line-height: 24px; font-weight: 500; }
.watermark span { color: #5fae62; font-size: 15px; line-height: 18px; }
</style>
